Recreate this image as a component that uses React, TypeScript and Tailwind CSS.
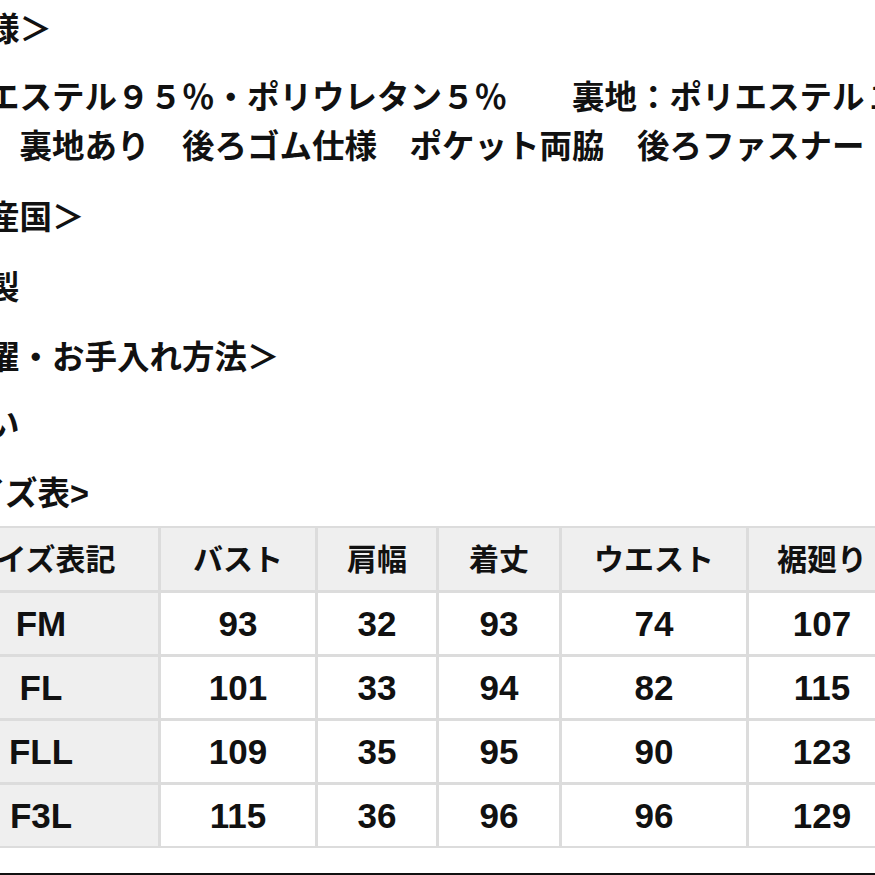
import React from 'react'

const headers = ['サイズ表記', 'バスト', '肩幅', '着丈', 'ウエスト', '裾廻り']

const rows = [
  ['FM', '93', '32', '93', '74', '107'],
  ['FL', '101', '33', '94', '82', '115'],
  ['FLL', '109', '35', '95', '90', '123'],
  ['F3L', '115', '36', '96', '96', '129'],
]

export default function App() {
  return (
    <div
      className="w-[875px] h-[875px] overflow-hidden bg-white text-[#111] flex flex-col"
      style={{ fontFamily: '"Liberation Sans", "Noto Sans CJK JP", sans-serif' }}
    >
      <div className="ml-[-78px] w-[990px] pt-[6px] text-[32.5px] leading-[49px] font-bold whitespace-nowrap">
        {/* 仕様 */}
        <p>＜仕様＞</p>
        <p className="mt-[19px]">ポリエステル９５％・ポリウレタン５％　　裏地：ポリエステル１００％</p>
        <p>　　　裏地あり　後ろゴム仕様　ポケット両脇　後ろファスナー</p>

        {/* 生産国 */}
        <p className="mt-[22px]">＜生産国＞</p>
        <p className="mt-[21px]">中国製</p>

        {/* 洗濯 */}
        <p className="mt-[21px]">＜洗濯・お手入れ方法＞</p>
        <p className="mt-[18px]">手洗い</p>

        {/* サイズ表 */}
        <p className="mt-[20px]">&lt;サイズ表&gt;</p>

        <div className="mt-[7px] grid grid-cols-[234px_154px_118px_120px_184px_146px] gap-[3px] p-[2px] bg-[#dcdcdc] w-max">
          {headers.map((h) => (
            <div
              key={h}
              className="h-[62px] bg-[#efefef] flex items-center justify-center text-[30px] font-bold"
            >
              {h}
            </div>
          ))}
          {rows.map((row) =>
            row.map((cell, i) => (
              <div
                key={row[0] + i}
                className={`h-[61px] flex items-center justify-center text-[35px] font-bold ${
                  i === 0 ? 'bg-[#efefef]' : 'bg-white'
                }`}
              >
                {cell}
              </div>
            ))
          )}
        </div>
      </div>

      {/* 下の区切り線 */}
      <div className="mt-auto h-[2px] bg-[#111]" />
    </div>
  )
}
